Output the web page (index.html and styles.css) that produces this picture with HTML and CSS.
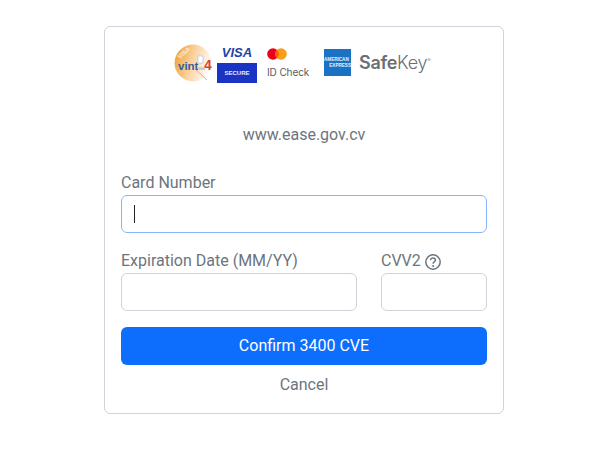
FILE: index.html
```html
<!DOCTYPE html>
<html lang="en">
<head>
<meta charset="utf-8">
<title>Payment</title>
<link rel="stylesheet" href="styles.css">
</head>
<body>
<main class="card">
  <div class="logos">
    <svg class="logo-vinti" width="40" height="40" viewBox="0 0 40 40">
      <defs>
        <linearGradient id="sun" x1="0" y1="0.3" x2="1" y2="0.6">
          <stop offset="0" stop-color="#f0a23c"/>
          <stop offset="0.45" stop-color="#f9d19a"/>
          <stop offset="0.8" stop-color="#fdeedd"/>
          <stop offset="1" stop-color="#ffffff"/>
        </linearGradient>
      </defs>
      <circle cx="19" cy="19" r="18.5" fill="url(#sun)"/>
      <path d="M21 25 L33 36" stroke="#eda5a0" stroke-width="1"/>
      <text x="6" y="15" class="vinti-top" transform="rotate(-42 6 15)">VISA</text>
      <text x="4" y="26" class="vinti-main">vint</text>
      <text x="30" y="26" class="vinti-four">4</text>
      <rect x="24" y="12" width="5" height="7" fill="#ffffff" stroke="#aebbd4" stroke-width="0.6"/>
      <rect x="24" y="23" width="7" height="3" fill="#c9cdd6"/>
    </svg>
    <div class="visa">
      <span class="visa-word">VISA</span>
      <span class="visa-secure">SECURE</span>
    </div>
    <div class="idcheck">
      <svg width="20" height="12" viewBox="0 0 20 12">
        <circle cx="6" cy="6" r="5.8" fill="#eb001b"/>
        <circle cx="14" cy="6" r="5.8" fill="#f79e1b"/>
        <path d="M10 1.7a5.8 5.8 0 0 1 0 8.6a5.8 5.8 0 0 1 0-8.6z" fill="#ff5f00"/>
      </svg>
      <span class="idcheck-text">ID Check</span>
    </div>
    <div class="amex">
      <span class="amex-line">AMERICAN</span>
      <span class="amex-line amex-right">EXPRESS</span>
    </div>
    <span class="safekey"><b class="safe">Safe</b>Key<sup class="reg">®</sup></span>
  </div>
  <p class="domain">www.ease.gov.cv</p>
  <form class="form">
    <label class="label label-card">Card Number</label>
    <div class="input input-focus"><span class="caret"></span></div>
    <div class="row">
      <div class="col-exp">
        <label class="label">Expiration Date (MM/YY)</label>
        <div class="input"></div>
      </div>
      <div class="col-cvv">
        <label class="label">CVV2
          <svg class="help" width="16" height="16" viewBox="0 0 16 16">
            <circle cx="8" cy="8" r="7.2" fill="none" stroke="#6c757d" stroke-width="1.5"/>
            <path d="M5.6 6.2c0-1.5 1.1-2.2 2.4-2.2s2.4.8 2.4 2c0 1-.6 1.4-1.2 1.9-.6.4-1 .8-1 1.6v.3" fill="none" stroke="#6c757d" stroke-width="1.5"/>
            <circle cx="8.1" cy="12" r="1" fill="#6c757d"/>
          </svg>
        </label>
        <div class="input"></div>
      </div>
    </div>
    <div class="confirm">Confirm 3400 CVE</div>
    <div class="cancel">Cancel</div>
  </form>
</main>
</body>
</html>
```
FILE: styles.css
```css
* { box-sizing: border-box; }
html, body { margin: 0; padding: 0; background: #fff; }
body { font-family: Roboto, "Liberation Sans", sans-serif; font-size: 16px; line-height: 24px; color: #6c757d; }
.card { width: 400px; height: 388px; margin: 26px 0 0 104px; border: 1px solid #ced4da; border-radius: 6px; padding: 17px 16px 0; }
.logos { display: flex; align-items: flex-start; height: 40px; padding-left: 53px; }
.logo-vinti { flex: none; }
.vinti-top { font: bold 6px "Liberation Sans", sans-serif; fill: #fdf0dc; }
.vinti-main { font: bold 11.5px "Liberation Sans", sans-serif; fill: #2f5f9f; }
.vinti-four { font: bold 14px "Liberation Sans", sans-serif; fill: #d8432c; }
.visa { width: 40px; margin-left: 3px; display: flex; flex-direction: column; align-items: center; }
.visa-word { font: italic bold 13px/17px "Liberation Sans", sans-serif; color: #1b45a8; height: 19px; }
.visa-secure { width: 40px; height: 20px; background: #1a35c4; color: #e8ecff; font: bold 6px/20px "Liberation Sans", sans-serif; text-align: center; }
.idcheck { width: 42px; margin-left: 10px; display: flex; flex-direction: column; align-items: flex-start; padding-top: 4px; }
.idcheck-text { font-family: Inter, Roboto, sans-serif; font-size: 10px; letter-spacing: -0.1px; line-height: 14px; color: #5a5a5a; margin-top: 5px; white-space: nowrap; }
.amex { width: 27px; height: 27px; margin: 5px 0 0 15px; background: #1a72c4; display: flex; flex-direction: column; justify-content: center; color: #e8f1fa; font: bold 4.6px/6px "Liberation Sans", sans-serif; }
.amex-line { display: block; white-space: nowrap; }
.amex-right { text-align: right; }
.safekey { margin: 5px 0 0 8px; font-family: Inter, sans-serif; font-size: 18px; font-weight: 300; line-height: 27px; color: #6b6e73; letter-spacing: -0.3px; }
.safe { font-weight: 600; }
.reg { font-size: 5px; line-height: 0; vertical-align: 7px; }
.domain { margin: 39px 0 0; text-align: center; line-height: 24px; }
.form { display: block; }
.label { display: block; line-height: 24px; }
.label-card { margin-top: 24px; }
.input { height: 38px; border: 1px solid #ced4da; border-radius: 6px; background: #fff; display: flex; align-items: center; padding-left: 12px; }
.input-focus { border-color: #86b7fe; }
.caret { width: 1px; height: 18px; background: #212529; }
.row { display: flex; gap: 24px; margin-top: 16px; }
.col-exp { width: 236px; }
.col-cvv { width: 106px; }
.help { vertical-align: -4px; }
.confirm { height: 38px; margin-top: 16px; background: #0d6efd; border-radius: 6px; color: #fff; text-align: center; line-height: 38px; }
.cancel { margin-top: 8px; text-align: center; line-height: 24px; }
```
